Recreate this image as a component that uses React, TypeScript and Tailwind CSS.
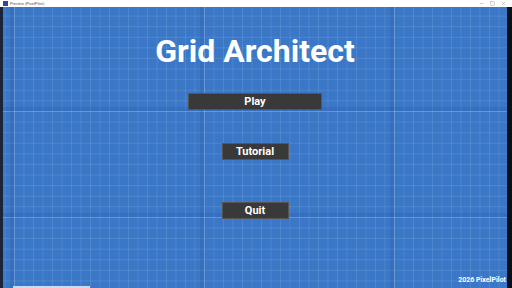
import { Minus, Square, X } from 'lucide-react'

const font = { fontFamily: 'Roboto, "Liberation Sans", sans-serif' }

function MenuButton({ label, wide }: { label: string; wide?: boolean }) {
  return (
    <button
      className={`${wide ? 'w-[134px]' : 'w-[67px]'} h-[17px] bg-[#393939] border border-[#555] text-white font-bold text-[11px] leading-none flex items-center justify-center`}
    >
      {label}
    </button>
  )
}

export default function App() {
  return (
    <div className="w-[512px] h-[288px] flex flex-col bg-[#111827] overflow-hidden" style={font}>
      {/* Title bar */}
      <div className="h-[7px] bg-white flex items-center pl-[3px] pr-[6px]">
        <div className="w-[5px] h-[5px] bg-[#3b3f9e]" />
        <span className="ml-[2px] text-[4px] leading-none text-[#555]">Preview (PixelPilot)</span>
        <div className="flex-1" />
        <div className="flex items-center gap-[6px] text-[#888]">
          <Minus size={5} strokeWidth={2} />
          <Square size={5} strokeWidth={2} />
          <X size={5} strokeWidth={2} />
        </div>
      </div>

      <div className="flex-1 flex">
        <div className="w-[3px] bg-[#1b2438]" />

        {/* Game canvas */}
        <div className="flex-1 flex flex-col items-center bg-[#3a77c7] bg-[linear-gradient(90deg,rgba(255,255,255,0.14)_1px,transparent_1px),linear-gradient(rgba(255,255,255,0.14)_1px,transparent_1px),linear-gradient(90deg,rgba(25,70,150,0.18)_0_4px,transparent_4px),linear-gradient(rgba(25,70,150,0.18)_0_4px,transparent_4px),linear-gradient(90deg,rgba(255,255,255,0.1)_1px,transparent_1px),linear-gradient(rgba(255,255,255,0.1)_1px,transparent_1px)] bg-[size:190px_106px,190px_106px,190px_106px,190px_106px,9.5px_10.6px,9.5px_10.6px] bg-[position:11px_-2px,11px_-2px,7px_-6px,7px_-6px,11px_-2px,11px_-2px]">
          <h1 className="mt-[26px] text-white font-bold text-[32px] leading-[36px]">Grid Architect</h1>
          <div className="mt-[24px]">
            <MenuButton label="Play" wide />
          </div>
          <div className="mt-[33px]">
            <MenuButton label="Tutorial" />
          </div>
          <div className="mt-[42px]">
            <MenuButton label="Quit" />
          </div>
          <div className="flex-1" />
          <div className="self-end pr-[1px] pb-[2px] text-white font-bold text-[7px] leading-none">2026 PixelPilot</div>
          <div className="self-start ml-[10px] w-[77px] h-[2px] bg-[#c9dcf3]" />
        </div>

        <div className="w-[5px] bg-[#0b0f19]" />
      </div>
    </div>
  )
}
